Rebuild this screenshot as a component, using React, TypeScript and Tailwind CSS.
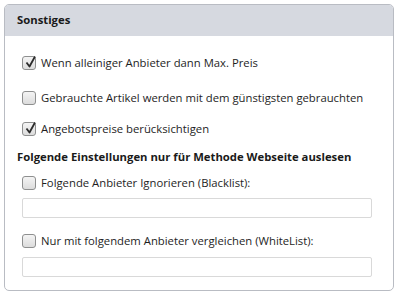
import React from "react";

function Check({ checked }: { checked?: boolean }) {
  return (
    <span className="relative inline-flex h-[14px] w-[14px] shrink-0 items-center justify-center rounded-[3px] border border-[#8e8f8f] bg-gradient-to-b from-[#f4f4f4] to-[#dcdcdc]">
      {checked && (
        <svg viewBox="0 0 14 14" className="absolute -top-[2px] left-[1px] h-[14px] w-[14px]">
          <path d="M2.5 7.5 L5.5 11.5 L11 1.5" fill="none" stroke="#2b2b2b" strokeWidth="1.8" strokeLinejoin="round" />
        </svg>
      )}
    </span>
  );
}

function Row({ checked, label, className }: { checked?: boolean; label: string; className?: string }) {
  return (
    <div className={"flex h-[14px] items-center gap-[5px] pl-[5px] " + (className ?? "")}>
      <Check checked={checked} />
      <span className="whitespace-nowrap text-[11.3px] leading-none text-[#1e1e1e]">{label}</span>
    </div>
  );
}

export default function App() {
  return (
    <div className="h-[299px] w-[398px] bg-white pl-[4px] pt-[4px] font-['Open_Sans',sans-serif]">
      <div className="h-[287px] w-[390px] overflow-hidden rounded-[5px] border border-[#b9bcc3] bg-white">
        <div className="flex h-[31px] items-center bg-[#d6d9e0] pl-[12px] text-[11.3px] font-bold text-[#1a1a1a]">
          Sonstiges
        </div>
        <div className="flex flex-col pl-[12px] pr-[20px]">
          <Row checked label="Wenn alleiniger Anbieter dann Max. Preis" className="mt-[20px]" />
          <Row label="Gebrauchte Artikel werden mit dem günstigsten gebrauchten" className="mt-[21px]" />
          <Row checked label="Angebotspreise berücksichtigen" className="mt-[17px]" />
          <div className="mt-[13px] h-[16px] whitespace-nowrap text-[11.3px] font-bold leading-[16px] text-[#1a1a1a]">
            Folgende Einstellungen nur für Methode Webseite auslesen
          </div>
          <Row label="Folgende Anbieter Ignorieren (Blacklist):" className="mt-[11px]" />
          <input className="ml-[5px] mt-[8px] h-[20px] w-[350px] rounded-[2px] border border-[#d9d9d9] bg-white outline-none" />
          <Row label="Nur mit folgendem Anbieter vergleichen (WhiteList):" className="mt-[16px]" />
          <input className="ml-[5px] mt-[9px] h-[20px] w-[350px] rounded-[2px] border border-[#d9d9d9] bg-white outline-none" />
        </div>
      </div>
    </div>
  );
}
